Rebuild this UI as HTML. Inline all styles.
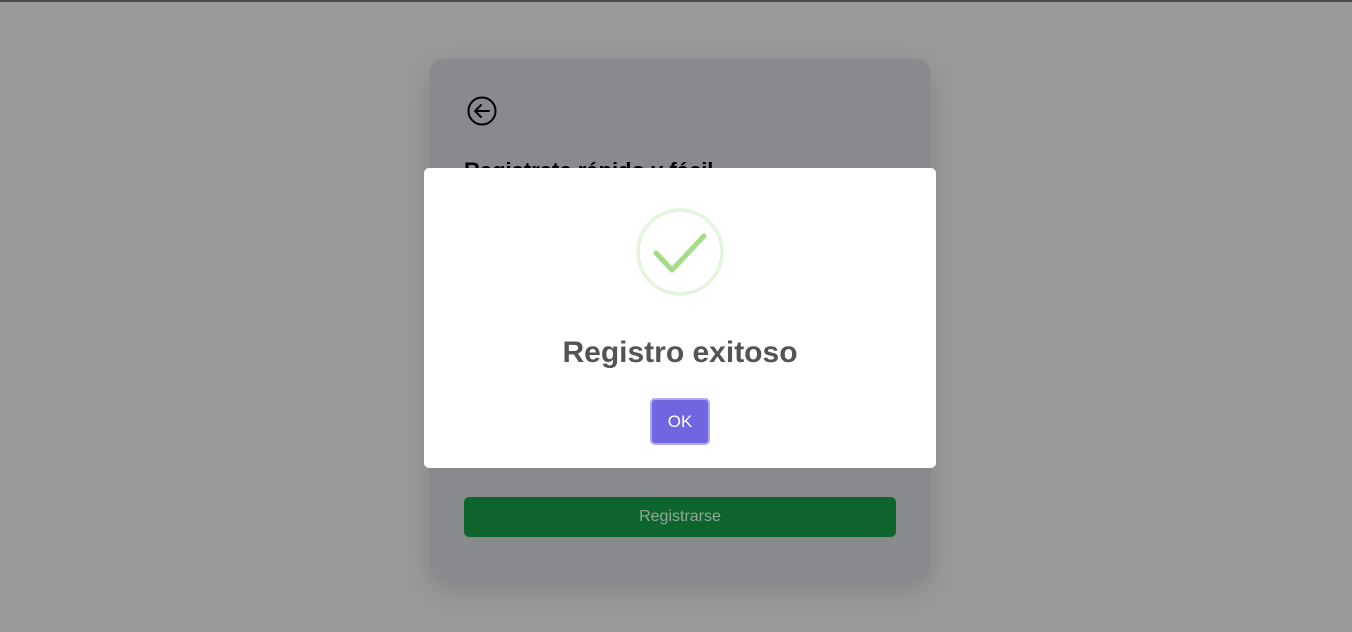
<!DOCTYPE html>
<html><head><meta charset="utf-8"><style>
html,body{margin:0;padding:0;width:1352px;height:632px;overflow:hidden;background:#9a9a9a;font-family:"Liberation Sans",sans-serif}
.top{position:absolute;left:0;top:0;width:1352px;height:2px;background:#4a4a4a}
.card{position:absolute;left:430px;top:59px;width:500px;height:520px;background:#898a8e;border-radius:12px;box-shadow:0 10px 30px rgba(0,0,0,.15)}
.back{position:absolute;left:466px;top:96px}
.h{position:absolute;left:464px;top:158px;font-size:22px;font-weight:bold;color:#000}
.field{position:absolute;left:464px;top:440px;width:432px;height:28px;background:#8f9094;border-radius:4px}
.reg{position:absolute;left:464px;top:497px;width:432px;height:40px;background:#0d652d;border-radius:5px;color:#8fa995;font-size:16px;text-align:center;line-height:40px}
.modal{position:absolute;left:424px;top:168px;width:512px;height:300px;background:#fff;border-radius:5px}
.title{position:absolute;left:0;width:512px;top:168px;text-align:center;font-size:30px;font-weight:bold;color:#545454}
.ok{position:absolute;left:226px;top:230px;width:56px;height:43px;background:#7066e0;border:2px solid #b0aaf0;border-radius:5px;color:#fff;font-size:17px;text-align:center;line-height:43px;box-sizing:content-box}
</style></head><body>
<div class="top"></div>
<div class="card"></div>
<svg class="back" width="32" height="32" viewBox="0 0 32 32"><circle cx="16" cy="15" r="13.5" fill="none" stroke="#000" stroke-width="2"/><path d="M23 15H9M15 9l-6 6 6 6" fill="none" stroke="#000" stroke-width="2" stroke-linecap="round" stroke-linejoin="round"/></svg>
<div class="h">Registrate rápido y fácil</div>
<div class="field"></div>
<div class="reg">Registrarse</div>
<div class="modal">
<svg style="position:absolute;left:211px;top:39px" width="90" height="90" viewBox="0 0 90 90"><circle cx="45" cy="45" r="42" fill="none" stroke="#e5f5dd" stroke-width="3.5"/><path d="M21 46l16 17 32-34" fill="none" stroke="#a5dc86" stroke-width="5" stroke-linecap="round" stroke-linejoin="round"/></svg>
<div class="title">Registro exitoso</div>
<div class="ok">OK</div>
</div>
</body></html>
